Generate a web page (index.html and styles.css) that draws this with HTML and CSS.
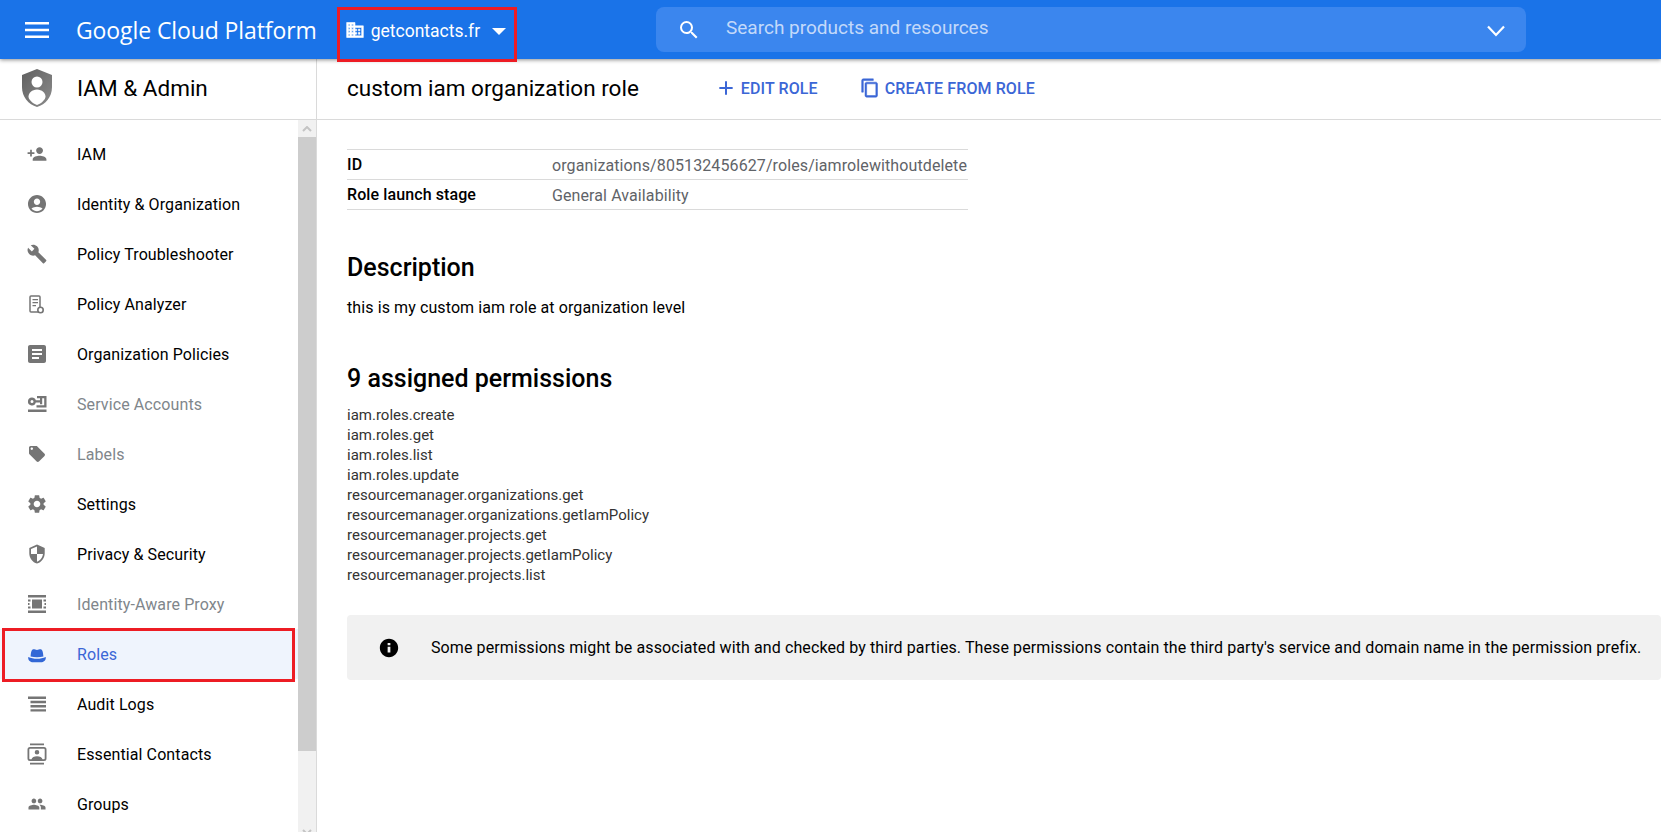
FILE: index.html
```html
<!DOCTYPE html>
<html lang="en">
<head>
<meta charset="UTF-8">
<title>custom iam organization role</title>
<link rel="stylesheet" href="styles.css">
</head>
<body>
  <header class="topbar">
    <button class="menu-btn" aria-label="Menu">
      <svg width="24" height="24" viewBox="0 0 24 24"><path d="M0 4h24v2.400H0zM0 10.800h24v2.400H0zM0 17.600h24V20H0z" fill="#fff"/></svg>
    </button>
    <div class="brand">Google Cloud Platform</div>
    <div class="project">
      <svg width="20" height="20" viewBox="0 0 24 24"><path fill="#fff" stroke="#fff" stroke-width="0.700" d="M12 7V3H2v18h20V7H12zM6 19H4v-2h2v2zm0-4H4v-2h2v2zm0-4H4V9h2v2zm0-4H4V5h2v2zm4 12H8v-2h2v2zm0-4H8v-2h2v2zm0-4H8V9h2v2zm0-4H8V5h2v2zm10 12h-8v-2h2v-2h-2v-2h2v-2h-2V9h8v10zm-2-8h-2v2h2v-2zm0 4h-2v2h2v-2z"/></svg>
      <span class="project-name">getcontacts.fr</span>
      <span class="caret"></span>
      <span class="callout callout-project"></span>
    </div>
    <div class="search">
      <svg width="24" height="24" viewBox="0 0 24 24"><path fill="#fff" d="M15.500 14h-.79l-.28-.27A6.470 6.470 0 0 0 16 9.500 6.500 6.500 0 1 0 9.500 16c1.610 0 3.090-.59 4.230-1.570l.27.28v.79l5 4.990L20.490 19l-4.990-5zm-6 0C7.010 14 5 11.990 5 9.500S7.010 5 9.500 5 14 7.010 14 9.500 11.990 14 9.500 14z"/></svg>
      <span class="search-text">Search products and resources</span>
      <svg class="search-chevron" width="20" height="12" viewBox="0 0 20 12"><path d="M2 1.500 10 10l8-8.500" fill="none" stroke="#fff" stroke-width="2.200"/></svg>
    </div>
  </header>

  <div class="page">
    <aside class="sidebar">
      <div class="sidebar-head">
        <svg class="shield" width="36" height="40" viewBox="0 0 36 40">
          <defs>
            <linearGradient id="shieldFill" x1="0" y1="0" x2="1" y2="1">
              <stop offset="0" stop-color="#5f5f5f"/>
              <stop offset="1" stop-color="#8c8c8c"/>
            </linearGradient>
          </defs>
          <path fill="url(#shieldFill)" d="M18 1 33 7v12c0 10-6.400 17.600-15 20C9.400 36.600 3 29 3 19V7z"/>
          <circle cx="18" cy="14" r="5.500" fill="#fff"/>
          <path fill="#fff" d="M18 21.500c5 0 8.500 3.700 8.500 7 0 3-4 7-8.500 8.500-4.500-1.500-8.500-5.500-8.500-8.500 0-3.300 3.500-7 8.500-7z"/>
        </svg>
        <span class="sidebar-title">IAM &amp; Admin</span>
      </div>
      <div class="nav-wrap">
        <nav class="nav">
          <a class="nav-item">
            <svg viewBox="-2 -2 28 28"><path d="M15 12c2.210 0 4-1.790 4-4s-1.790-4-4-4-4 1.790-4 4 1.790 4 4 4zm-9-2V7H4v3H1v2h3v3h2v-3h3v-2H6zm9 4c-2.670 0-8 1.340-8 4v2h16v-2c0-2.660-5.330-4-8-4z"/></svg>
            IAM
          </a>
          <a class="nav-item">
            <svg viewBox="-1.300 -1.300 26.600 26.600"><path d="M12 2C6.480 2 2 6.480 2 12s4.480 10 10 10 10-4.480 10-10S17.520 2 12 2zm0 4c1.930 0 3.500 1.570 3.500 3.500S13.930 13 12 13s-3.500-1.570-3.500-3.500S10.070 6 12 6zm0 14c-2.030 0-4.430-.82-6.140-2.880C7.550 15.800 9.680 15 12 15s4.450.8 6.140 2.120C16.430 19.180 14.030 20 12 20z"/></svg>
            Identity &amp; Organization
          </a>
          <a class="nav-item">
            <svg viewBox="-2 -2 28 28"><path d="M22.700 19 13.600 9.900c.9-2.300.4-5-1.500-6.900-2-2-5-2.400-7.400-1.300L9 6 6 9 1.600 4.700C.4 7.100.9 10.100 2.900 12.100c1.900 1.900 4.600 2.400 6.900 1.500l9.100 9.100c.4.400 1 .4 1.400 0l2.300-2.300c.5-.4.5-1.100.1-1.400z"/></svg>
            Policy Troubleshooter
          </a>
          <a class="nav-item">
            <svg viewBox="0 0 24 24"><path fill="none" stroke="#757575" stroke-width="1.500" d="M14 20H6a1 1 0 0 1-1-1V5a1 1 0 0 1 1-1h8a1 1 0 0 1 1 1v10"/><path d="M7.500 7H13v1.300H7.500zM7.500 10H13v1.300H7.500zM7.500 13H11v1.300H7.500z"/><circle cx="15.500" cy="18" r="2.700" fill="none" stroke="#757575" stroke-width="1.600"/></svg>
            Policy Analyzer
          </a>
          <a class="nav-item">
            <svg viewBox="0 0 24 24"><path d="M19 3H5c-1.100 0-2 .9-2 2v14c0 1.100.9 2 2 2h14c1.100 0 2-.9 2-2V5c0-1.100-.9-2-2-2zm-5 14H7v-2h7v2zm3-4H7v-2h10v2zm0-4H7V7h10v2z"/></svg>
            Organization Policies
          </a>
          <a class="nav-item muted">
            <svg viewBox="0 0 24 24"><path fill-rule="evenodd" d="M7 5.500a4 4 0 0 1 3.800 2.800H15V6.300h-3V4h9.500v11.500H11.500v-2.200h7.700V6.300h-2v6h-2.200v-1.700h-4.200A4 4 0 1 1 7 5.500zm0 2.500a1.500 1.500 0 1 0 0 3 1.500 1.500 0 0 0 0-3zM3 17.500h18.500V20H3z"/></svg>
            Service Accounts
          </a>
          <a class="nav-item muted">
            <svg viewBox="-3 -3 30 30"><path d="M21.410 11.580l-9-9C12.050 2.220 11.550 2 11 2H4c-1.100 0-2 .9-2 2v7c0 .55.22 1.050.59 1.420l9 9c.36.36.86.58 1.410.58.55 0 1.050-.22 1.410-.59l7-7c.37-.36.59-.86.59-1.410 0-.55-.23-1.060-.59-1.420zM5.500 7C4.670 7 4 6.330 4 5.500S4.670 4 5.500 4 7 4.670 7 5.500 6.330 7 5.500 7z"/></svg>
            Labels
          </a>
          <a class="nav-item">
            <svg viewBox="-1 -1 26 26"><path d="M19.140 12.940c.04-.3.060-.61.060-.94 0-.32-.02-.64-.07-.94l2.030-1.580a.49.49 0 0 0 .12-.61l-1.920-3.320a.488.488 0 0 0-.59-.22l-2.390.96c-.5-.38-1.030-.7-1.620-.94l-.36-2.540a.484.484 0 0 0-.48-.41h-3.840c-.24 0-.43.17-.47.41l-.36 2.540c-.59.24-1.130.57-1.620.94l-2.390-.96c-.22-.08-.47 0-.59.22L2.740 8.870c-.12.21-.08.47.12.61l2.030 1.580c-.05.3-.09.63-.09.94s.02.64.07.94l-2.030 1.580a.49.49 0 0 0-.12.61l1.920 3.320c.12.22.37.29.59.22l2.390-.96c.5.38 1.030.7 1.620.94l.36 2.540c.05.24.24.41.48.41h3.840c.24 0 .44-.17.47-.41l.36-2.540c.59-.24 1.130-.56 1.620-.94l2.390.96c.22.08.47 0 .59-.22l1.920-3.320c.12-.22.07-.47-.12-.61l-2.010-1.580zM12 15.600c-1.980 0-3.600-1.620-3.600-3.600s1.620-3.600 3.600-3.600 3.600 1.620 3.600 3.600-1.620 3.600-3.600 3.600z"/></svg>
            Settings
          </a>
          <a class="nav-item">
            <svg viewBox="-2 -2 28 28"><path d="M12 1 3 5v6c0 5.550 3.840 10.740 9 12 5.160-1.260 9-6.450 9-12V5l-9-4zm0 10.990h7c-.53 4.120-3.280 7.790-7 8.940V12H5V6.300l7-3.110v8.800z"/></svg>
            Privacy &amp; Security
          </a>
          <a class="nav-item muted">
            <svg viewBox="0 0 24 24"><path d="M3 3h18v2.500H3zM3 18.500h18V21H3zM3 7.500h2.500v2H3zM3 14.500h2.500v2H3zM18.500 7.500H21v2h-2.500zM18.500 14.500H21v2h-2.500zM7 7.500h10v9H7zM3 11h1.500v2H3zM19.500 11H21v2h-1.500z"/></svg>
            Identity-Aware Proxy
          </a>
          <a class="nav-item active">
            <svg viewBox="0 0 24 24"><path d="M8.500 7.300c1.300 0 2.200.7 3.500.7s2.200-.7 3.500-.7c1.700 0 2.600 2 2.900 7.200-2 .5-4.200.7-6.400.7s-4.400-.2-6.400-.7C5.900 9.300 6.800 7.300 8.500 7.300z"/><path d="M3.200 15c2.700 1.200 5.700 1.800 8.800 1.800s6.100-.6 8.800-1.800v1c0 2.400-2.300 4.300-4.800 4.300H8c-2.500 0-4.800-1.900-4.800-4.300z"/></svg>
            Roles
            <span class="callout callout-roles"></span>
          </a>
          <a class="nav-item">
            <svg viewBox="0 0 24 24"><path d="M3 4.500h18v2.400H3zM5.500 8.800H21v2.400H5.500zM5.500 13H21v2.400H5.500zM5.500 17.200H21v2.400H5.500z"/></svg>
            Audit Logs
          </a>
          <a class="nav-item">
            <svg viewBox="0 0 24 24"><path fill-rule="evenodd" d="M5 1.500h14v1.800H5zM5 20.700h14v1.800H5zM5 5h14a2.500 2.500 0 0 1 2.500 2.500v9A2.500 2.500 0 0 1 19 19H5a2.500 2.500 0 0 1-2.500-2.500v-9A2.500 2.500 0 0 1 5 5zm0 1.800a.7.7 0 0 0-.7.7v9a.7.7 0 0 0 .7.7h1.500c.5-2 2.700-3 5.500-3s5 1 5.500 3H19a.7.7 0 0 0 .7-.7v-9a.7.7 0 0 0-.7-.7zM12 8a2.300 2.300 0 1 1 0 4.600A2.300 2.300 0 0 1 12 8z"/></svg>
            Essential Contacts
          </a>
          <a class="nav-item">
            <svg viewBox="-3.500 -3.500 31 31"><path d="M16 11c1.660 0 2.990-1.340 2.990-3S17.660 5 16 5s-3 1.340-3 3 1.340 3 3 3zm-8 0c1.660 0 2.990-1.340 2.990-3S9.660 5 8 5 5 6.340 5 8s1.340 3 3 3zm0 2c-2.330 0-7 1.170-7 3.500V19h14v-2.500C15 14.170 10.330 13 8 13zm8 0c-.29 0-.62.02-.97.05C16.190 13.890 17 15.020 17 16.500V19h6v-2.500c0-2.330-4.670-3.500-7-3.500z"/></svg>
            Groups
          </a>
        </nav>
        <div class="scrollbar">
          <div class="scroll-arrow"><svg width="10" height="6" viewBox="0 0 10 6"><path d="M1 5 5 1l4 4" fill="none" stroke="#c4c4c4" stroke-width="2"/></svg></div>
          <div class="scroll-thumb"></div>
          <div class="scroll-arrow scroll-arrow-down"><svg width="10" height="6" viewBox="0 0 10 6"><path d="M1 1l4 4 4-4" fill="none" stroke="#c4c4c4" stroke-width="2"/></svg></div>
        </div>
      </div>
    </aside>

    <main class="main">
      <div class="toolbar">
        <h1 class="role-title">custom iam organization role</h1>
        <a class="tool-btn tool-edit">
          <svg width="16" height="16" viewBox="0 0 24 24"><path fill="#3b66d6" d="M22 13.500h-8.500V22h-3v-8.500H2v-3h8.500V2h3v8.500H22z"/></svg>
          EDIT ROLE
        </a>
        <a class="tool-btn tool-create">
          <svg width="20" height="20" viewBox="0 0 24 24"><path fill="#3b66d6" stroke="#3b66d6" stroke-width="0.600" d="M16 1H4c-1.100 0-2 .9-2 2v14h2V3h12V1zm3 4H8c-1.100 0-2 .9-2 2v14c0 1.100.9 2 2 2h11c1.100 0 2-.9 2-2V7c0-1.100-.9-2-2-2zm0 16H8V7h11v14z"/></svg>
          CREATE FROM ROLE
        </a>
      </div>
      <div class="content">
        <table class="info-table">
          <tr><th>ID</th><td>organizations/805132456627/roles/iamrolewithoutdelete</td></tr>
          <tr><th>Role launch stage</th><td>General Availability</td></tr>
        </table>
        <h2 class="section-title">Description</h2>
        <p class="desc">this is my custom iam role at organization level</p>
        <h2 class="section-title perms-title">9 assigned permissions</h2>
        <ul class="perms">
          <li>iam.roles.create</li>
          <li>iam.roles.get</li>
          <li>iam.roles.list</li>
          <li>iam.roles.update</li>
          <li>resourcemanager.organizations.get</li>
          <li>resourcemanager.organizations.getIamPolicy</li>
          <li>resourcemanager.projects.get</li>
          <li>resourcemanager.projects.getIamPolicy</li>
          <li>resourcemanager.projects.list</li>
        </ul>
        <div class="notice">
          <svg width="22" height="22" viewBox="0 0 24 24"><path fill="#000" d="M12 2C6.480 2 2 6.480 2 12s4.480 10 10 10 10-4.480 10-10S17.520 2 12 2zm1.500 15h-3v-6.500h3V17zm0-8h-3V6.500h3V9z"/></svg>
          <span>Some permissions might be associated with and checked by third parties. These permissions contain the third party's service and domain name in the permission prefix.</span>
        </div>
      </div>
    </main>
  </div>
</body>
</html>
```
FILE: styles.css
```css
* {
  box-sizing: border-box;
}

html, body {
  height: 100%;
}

body {
  margin: 0;
  height: 832px;
  overflow: hidden;
  font-family: Roboto, sans-serif;
  font-size: 16px;
  letter-spacing: 0.1px;
  color: #000;
  background-color: #fff;
}

.topbar {
  position: relative;
  z-index: 2;
  display: flex;
  align-items: center;
  height: 59px;
  background-color: #1a73e8;
  box-shadow: 0 1px 4px rgba(0, 0, 0, 0.45);
  color: #fff;
}

.menu-btn {
  display: flex;
  margin-left: 25px;
  padding: 0;
  background: none;
  border: none;
}

.brand {
  margin-left: 27px;
  font-size: 23px;
  font-family: "Open Sans", Roboto, sans-serif;
  letter-spacing: -0.1px;
  white-space: nowrap;
}

.project {
  position: relative;
  display: flex;
  align-items: center;
  margin-left: 28px;
  height: 59px;
}

.project-name {
  margin-left: 6px;
  font-size: 17.500px;
  letter-spacing: 0;
  margin-top: 2px;
}

.caret {
  margin-left: 12px;
  margin-top: 3px;
  border-left: 7.500px solid transparent;
  border-right: 7.500px solid transparent;
  border-top: 7.500px solid #fff;
}

.callout {
  position: absolute;
  border: 3px solid #ed1c24;
  pointer-events: none;
}

.callout-project {
  left: -8px;
  top: 7px;
  width: 180px;
  height: 55px;
}

.search {
  display: flex;
  align-items: center;
  position: absolute;
  left: 656px;
  top: 7px;
  width: 870px;
  height: 45px;
  padding: 0 20px 0 21px;
  background-color: #3b86ee;
  border-radius: 8px;
}

.search-text {
  margin-left: 25px;
  margin-bottom: 5px;
  font-size: 19px;
  letter-spacing: 0;
  color: #c3d9fa;
}

.search-chevron {
  margin-left: auto;
  margin-top: 2px;
}

.page {
  display: flex;
  height: 773px;
}

.sidebar {
  width: 317px;
  flex-shrink: 0;
  border-right: 1px solid #dadada;
}

.sidebar-head {
  display: flex;
  align-items: center;
  height: 61px;
  padding: 0 0 2px 19px;
  border-bottom: 1px solid #dadada;
}

.sidebar-title {
  margin-left: 22px;
  font-size: 22.500px;
  letter-spacing: 0;
}

.nav-wrap {
  display: flex;
  height: 720px;
}

.nav {
  flex: 1;
  padding-top: 9px;
}

.nav-item {
  position: relative;
  display: flex;
  align-items: center;
  height: 50px;
  padding-left: 25px;
  white-space: nowrap;
}

.nav-item svg {
  width: 24px;
  height: 24px;
  margin-right: 28px;
  fill: #757575;
  flex-shrink: 0;
}

.muted {
  color: #80868b;
}

.active {
  color: #3b66d6;
  background-color: #eff4fd;
}

.nav-item.active svg {
  fill: #3367d6;
}

.callout-roles {
  left: 2px;
  top: -1px;
  width: 293px;
  height: 54px;
}

.scrollbar {
  display: flex;
  flex-direction: column;
  width: 18px;
  background-color: #f1f1f1;
  margin-right: 0;
}

.scroll-arrow {
  display: flex;
  align-items: center;
  justify-content: center;
  height: 17px;
  background-color: #f1f1f1;
}

.scroll-thumb {
  height: 614px;
  background-color: #cdcdcd;
}

.scroll-arrow-down {
  margin-top: auto;
}

.main {
  flex: 1;
  min-width: 0;
}

.toolbar {
  display: flex;
  align-items: center;
  height: 61px;
  padding: 0 0 2px 30px;
  border-bottom: 1px solid #dadada;
}

.role-title {
  margin: 0;
  font-size: 22.500px;
  font-weight: 400;
  letter-spacing: 0;
}

.tool-btn {
  display: flex;
  align-items: center;
  font-weight: 500;
  letter-spacing: 0.1px;
  color: #3b66d6;
}

.tool-edit {
  margin-left: 79px;
}

.tool-edit svg {
  margin-right: 7px;
}

.tool-create {
  margin-left: 42px;
}

.tool-create svg {
  margin-right: 5px;
}

.content {
  padding: 29px 0 0 30px;
}

.info-table {
  width: 621px;
  border-collapse: collapse;
  border-top: 1px solid #dadada;
}

.info-table tr {
  height: 30px;
  border-bottom: 1px solid #dadada;
}

.info-table th {
  width: 205px;
  padding: 0;
  font-weight: 500;
  text-align: left;
}

.info-table td {
  padding: 1px 0 0;
  color: #5f6368;
}

.section-title {
  margin: 42px 0 0;
  font-size: 25px;
  font-weight: 500;
  line-height: 32px;
  letter-spacing: 0;
}

.desc {
  margin: 14px 0 0;
  line-height: 20px;
}

.perms-title {
  margin-top: 45px;
}

.perms {
  margin: 10px 0 0;
  padding: 0;
  list-style: none;
  font-size: 15px;
  line-height: 20px;
  letter-spacing: 0;
  color: #333;
}

.notice {
  display: flex;
  align-items: center;
  height: 65px;
  margin-top: 30px;
  padding-left: 31px;
  background-color: #f1f1f1;
  border-radius: 4px;
  white-space: nowrap;
}

.notice span {
  margin-left: 31px;
}
```
